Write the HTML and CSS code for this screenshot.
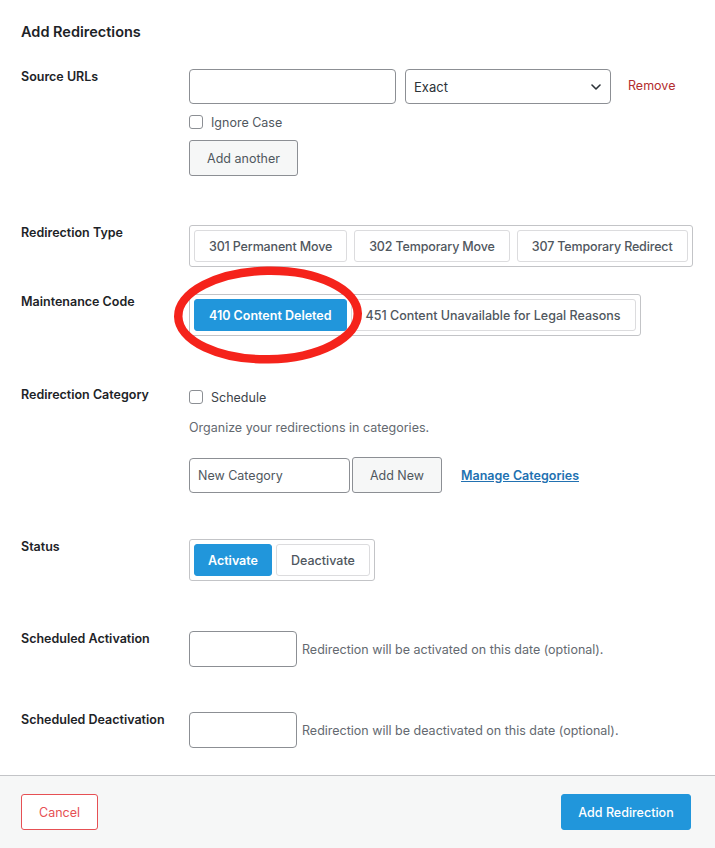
FILE: index.html
```html
<!DOCTYPE html>
<html>
<head>
<meta charset="utf-8">
<link rel="stylesheet" href="styles.css">
</head>
<body>
<div class="panel">
  <h2 class="title">Add Redirections</h2>

  <div class="row row-source">
    <div class="label">Source URLs</div>
    <div class="field">
      <div class="line">
        <div class="input input-url"></div>
        <div class="select"><span>Exact</span>
          <svg class="chev" width="10" height="6" viewBox="0 0 10 6"><path d="M1 1l4 4 4-4" fill="none" stroke="#2c3338" stroke-width="1.6" stroke-linecap="round" stroke-linejoin="round"/></svg>
        </div>
        <a class="remove">Remove</a>
      </div>
      <label class="check check-ignore"><span class="box"></span><span class="check-text">Ignore Case</span></label>
      <button class="btn-secondary btn-another">Add another</button>
    </div>
  </div>

  <div class="row row-type">
    <div class="label">Redirection Type</div>
    <div class="field">
      <div class="group group-type">
        <button class="seg">301 Permanent Move</button>
        <button class="seg">302 Temporary Move</button>
        <button class="seg">307 Temporary Redirect</button>
      </div>
    </div>
  </div>

  <div class="row row-maint">
    <div class="label">Maintenance Code</div>
    <div class="field field-maint">
      <div class="group group-tight">
        <button class="seg seg-active">410 Content Deleted</button>
        <button class="seg">451 Content Unavailable for Legal Reasons</button>
      </div>
      <svg class="ring" width="200" height="104" viewBox="0 0 200 104"><ellipse cx="100" cy="52" rx="89.75" ry="44.25" fill="none" stroke="#f5231b" stroke-width="8.5" transform="rotate(-1 100 52)"/></svg>
    </div>
  </div>

  <div class="row row-cat">
    <div class="label">Redirection Category</div>
    <div class="field">
      <label class="check check-schedule"><span class="box"></span><span class="check-text dark">Schedule</span></label>
      <p class="hint">Organize your redirections in categories.</p>
      <div class="line line-cat">
        <div class="input input-cat"><span class="placeholder">New Category</span></div>
        <button class="btn-secondary btn-addnew">Add New</button>
        <a class="manage">Manage Categories</a>
      </div>
    </div>
  </div>

  <div class="row row-status">
    <div class="label">Status</div>
    <div class="field">
      <div class="group group-tight">
        <button class="seg seg-active seg-activate">Activate</button>
        <button class="seg">Deactivate</button>
      </div>
    </div>
  </div>

  <div class="row row-act">
    <div class="label">Scheduled Activation</div>
    <div class="field line">
      <div class="input input-date"></div>
      <span class="date-hint">Redirection will be activated on this date (optional).</span>
    </div>
  </div>

  <div class="row row-deact">
    <div class="label">Scheduled Deactivation</div>
    <div class="field line">
      <div class="input input-date"></div>
      <span class="date-hint">Redirection will be deactivated on this date (optional).</span>
    </div>
  </div>
</div>

<div class="footer">
  <button class="btn-cancel">Cancel</button>
  <button class="btn-primary">Add Redirection</button>
</div>
</body>
</html>
```

FILE: styles.css
```css
* { box-sizing: border-box; }
html, body { margin: 0; padding: 0; background: #fff; }
body {
  font-family: Inter, "Open Sans", "Liberation Sans", sans-serif;
  font-size: 13px;
  color: #1d2327;
  width: 715px;
  height: 848px;
  overflow: hidden;
  display: flex;
  flex-direction: column;
}
button { font-family: inherit; cursor: pointer; }

.panel {
  padding: 22px 24px 0 21px;
  flex: 1;
}
.title {
  margin: 0 0 27px;
  font-size: 14.5px;
  line-height: 20px;
  font-weight: 600;
  color: #1d2327;
}

.row {
  display: grid;
  grid-template-columns: 168px 1fr;
}
.row-source { margin-bottom: 49px; }
.row-type { margin-bottom: 27px; }
.row-maint { margin-bottom: 51px; }
.row-cat { margin-bottom: 46px; }
.row-status { margin-bottom: 50px; }
.row-act { margin-bottom: 45px; }

.label {
  font-size: 12.5px;
  font-weight: 600;
  line-height: 14px;
  padding-top: 1px;
  color: #1d2327;
}

.field { position: relative; }
.line { display: flex; align-items: center; }

.input {
  height: 35px;
  border: 1px solid #8c8f94;
  border-radius: 4px;
  background: #fff;
  display: flex;
  align-items: center;
}
.input-url { width: 207px; }
.select {
  width: 206px;
  height: 35px;
  margin-left: 9px;
  border: 1px solid #8c8f94;
  border-radius: 4px;
  display: flex;
  align-items: center;
  justify-content: space-between;
  padding: 0 9px 0 8px;
  color: #2c3338;
  font-size: 13px;
}
.chev { display: block; margin-top: 1px; }
.remove {
  margin-left: 17px;
  color: #b32d2e;
  font-size: 12.5px;
  margin-top: -2px;
}

.check {
  display: flex;
  align-items: center;
  height: 14px;
}
.check-ignore { margin-top: 11px; }
.box {
  width: 14px;
  height: 14px;
  border: 1px solid #8c8f94;
  border-radius: 3px;
  background: #fff;
}
.check-text {
  margin-left: 8px;
  color: #50575e;
  font-size: 12.5px;
}
.check-text.dark { color: #3c434a; }

.btn-secondary {
  height: 36px;
  border: 1px solid #8c8f94;
  border-radius: 3px;
  background: #f6f7f7;
  color: #50575e;
  font-size: 12.5px;
  padding: 0;
}
.btn-another { width: 109px; margin-top: 11px; display: block; }

.group {
  display: inline-flex;
  gap: 7px;
  padding: 4px;
  border: 1px solid #c3c4c7;
  border-radius: 3px;
  background: #fff;
}
.group-tight { gap: 4px; }
.seg {
  height: 32px;
  border: 1px solid #dcdcde;
  border-radius: 3px;
  background: #fff;
  color: #50575e;
  font-size: 12.5px;
  font-weight: 500;
  padding: 0 14px;
  white-space: nowrap;
}
.group-type .seg { letter-spacing: -0.15px; }
.seg-active {
  background: #2196db;
  border-color: #2196db;
  color: #fff;
  font-weight: 600;
}
.seg-activate { width: 78px; padding: 0; }

.ring {
  position: absolute;
  left: -21px;
  top: -31px;
  pointer-events: none;
}

.row-cat .field { padding-top: 3px; }
.hint {
  margin: 16px 0 0;
  color: #646970;
  font-size: 12.5px;
  line-height: 16px;
}
.line-cat { margin-top: 21px; }
.input-cat { width: 161px; padding-left: 8px; }
.placeholder { color: #50575e; font-size: 12.5px; }
.btn-addnew { width: 90px; margin-left: 2px; }
.manage {
  margin-left: 19px;
  color: #2271b1;
  font-weight: 600;
  font-size: 12.5px;
  text-decoration: underline;
}

.input-date { width: 108px; height: 36px; }
.date-hint {
  margin-left: 5px;
  color: #646970;
  font-size: 12.5px;
  margin-top: 1px;
}

.footer {
  height: 73px;
  border-top: 1px solid #c3c4c7;
  background: #f6f7f7;
  display: flex;
  justify-content: space-between;
  align-items: flex-start;
  padding: 18px 24px 0 21px;
  flex: none;
}
.btn-cancel {
  width: 77px;
  height: 36px;
  border: 1px solid #e65054;
  border-radius: 3px;
  background: #fff;
  color: #e65054;
  font-size: 12.5px;
}
.btn-primary {
  width: 130px;
  height: 36px;
  border: 1px solid #2196db;
  border-radius: 3px;
  background: #2196db;
  color: #fff;
  font-size: 12.5px;
  font-weight: 500;
}
```
